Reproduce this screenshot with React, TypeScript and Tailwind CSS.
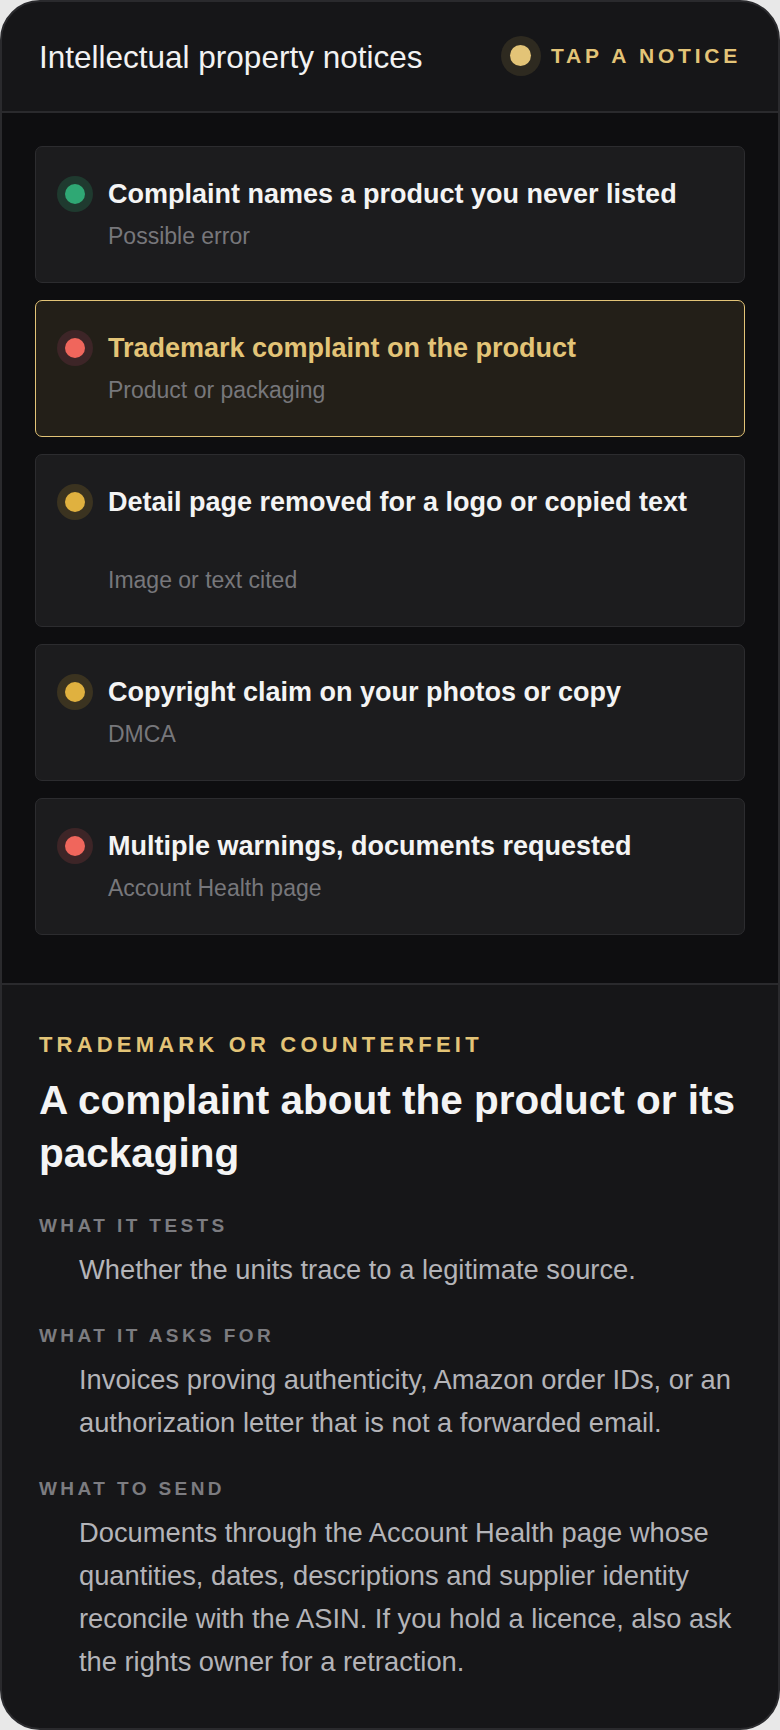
import React from 'react';

type Level = 'ok' | 'warn' | 'alert';

interface Notice {
  title: string;
  hint: string;
  level: Level;
  tall?: boolean;
}

const notices: Notice[] = [
  { title: 'Complaint names a product you never listed', hint: 'Possible error', level: 'ok' },
  { title: 'Trademark complaint on the product', hint: 'Product or packaging', level: 'alert' },
  { title: 'Detail page removed for a logo or copied text', hint: 'Image or text cited', level: 'warn', tall: true },
  { title: 'Copyright claim on your photos or copy', hint: 'DMCA', level: 'warn' },
  { title: 'Multiple warnings, documents requested', hint: 'Account Health page', level: 'alert' },
];

const details = [
  { label: 'What it tests', body: 'Whether the units trace to a legitimate source.' },
  {
    label: 'What it asks for',
    body: 'Invoices proving authenticity, Amazon order IDs, or an authorization letter that is not a forwarded email.',
  },
  {
    label: 'What to send',
    body: 'Documents through the Account Health page whose quantities, dates, descriptions and supplier identity reconcile with the ASIN. If you hold a licence, also ask the rights owner for a retraction.',
  },
];

const dotStyles: Record<Level, { halo: string; dot: string }> = {
  ok: { halo: 'bg-[#1f3a2f]', dot: 'bg-[#2fa874]' },
  warn: { halo: 'bg-[#3b3320]', dot: 'bg-[#e0b13f]' },
  alert: { halo: 'bg-[#3d2527]', dot: 'bg-[#f0665c]' },
};

function StatusDot({ level }: { level: Level }) {
  const s = dotStyles[level];
  return (
    <div className={`w-[36px] h-[36px] rounded-full flex items-center justify-center shrink-0 ${s.halo}`}>
      <div className={`w-[20px] h-[20px] rounded-full ${s.dot}`}></div>
    </div>
  );
}

export default function App() {
  const selected = 1;

  return (
    <div className="min-h-screen bg-[#e8e8e8]" style={{ fontFamily: '"Liberation Sans", Arial, sans-serif' }}>
      <div className="w-[780px] h-[1730px] rounded-[40px] border-2 border-[#2a2a2d] bg-[#161618] overflow-hidden flex flex-col">
        {/* Header */}
        <div className="h-[111px] px-[37px] flex items-center justify-between border-b-2 border-[#2a2a2d] shrink-0">
          <h1 className="text-[31.5px] leading-[38px] text-[#f2f2f2]">Intellectual property notices</h1>
          <div className="flex items-center gap-[10px] pb-[2px]">
            <div className="w-[40px] h-[40px] rounded-full bg-[#2e2a20] flex items-center justify-center">
              <div className="w-[21px] h-[21px] rounded-full bg-[#e3c477]"></div>
            </div>
            <span className="text-[21px] font-bold tracking-[0.18em] text-[#e3c477]">TAP A NOTICE</span>
          </div>
        </div>

        {/* Notice list */}
        <div className="bg-[#0e0e10] px-[33px] pt-[33px] pb-[48px] flex flex-col gap-[17px] border-b-2 border-[#2a2a2d] shrink-0">
          {notices.map((n, index) => {
            const active = index === selected;
            return (
              <div
                key={index}
                className={`rounded-[7px] border pl-[21px] pr-[20px] pt-[28px] pb-[31px] flex gap-[15px] ${
                  active ? 'border-[#e3c477] bg-[#231f18]' : 'border-[#2c2c2f] bg-[#1c1c1e]'
                }`}
              >
                <div className="h-[38px] flex items-center">
                  <StatusDot level={n.level} />
                </div>
                <div className="flex flex-col">
                  <div
                    className={`text-[27px] leading-[38px] font-bold ${n.tall ? 'min-h-[74px]' : ''} ${
                      active ? 'text-[#e3c477]' : 'text-[#f4f4f4]'
                    }`}
                  >
                    {n.title}
                  </div>
                  <div className="mt-[8px] text-[23px] leading-[30px] text-[#77777b]">{n.hint}</div>
                </div>
              </div>
            );
          })}
        </div>

        {/* Detail for the selected notice */}
        <div className="flex-1 px-[37px] pt-[46px]">
          <div className="text-[22px] leading-[28px] font-bold tracking-[0.19em] text-[#e3c477]">TRADEMARK OR COUNTERFEIT</div>
          <h2 className="mt-[15px] text-[40.5px] leading-[53px] font-bold text-[#f4f4f4]">
            A complaint about the product or its packaging
          </h2>
          <div className="mt-[34px] flex flex-col gap-[33px]">
            {details.map((d, index) => (
              <div key={index}>
                <div className="text-[19px] leading-[24px] font-bold tracking-[0.18em] uppercase text-[#7c7c80]">{d.label}</div>
                <p className="mt-[10px] pl-[40px] text-[27.3px] leading-[43px] text-[#b4b4b8]">{d.body}</p>
              </div>
            ))}
          </div>
        </div>
      </div>
    </div>
  );
}
